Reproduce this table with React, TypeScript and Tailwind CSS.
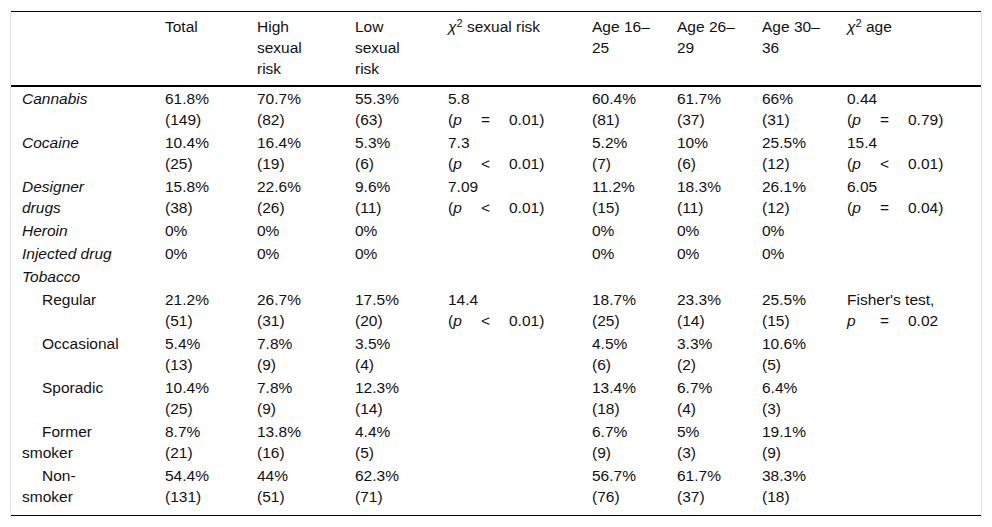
import React from 'react'

type Cell = string[] | React.ReactNode

// ─── p-value line: "(p  =  0.01)" with wide gaps ──────────────────────────────
function PLine({ op, val, paren = true }: { op: string; val: string; paren?: boolean }) {
  return (
    <div className="whitespace-nowrap">
      <span className="inline-block w-[33px]">{paren && '('}<i>p</i></span>
      <span className="inline-block w-[28px]">{op}</span>
      {val}{paren && ')'}
    </div>
  )
}

function Chi({ label }: { label: string }) {
  return (
    <span><i>χ</i><sup className="text-[11px]">2</sup> {label}</span>
  )
}

const stat = (chi: string, op: string, val: string) => (
  <>
    <div>{chi}</div>
    <PLine op={op} val={val} />
  </>
)

interface Row {
  label: string
  italic?: boolean
  indent?: boolean
  cells: Cell[]
}

const rows: Row[] = [
  { label: 'Cannabis', italic: true, cells: [['61.8%', '(149)'], ['70.7%', '(82)'], ['55.3%', '(63)'], stat('5.8', '=', '0.01'), ['60.4%', '(81)'], ['61.7%', '(37)'], ['66%', '(31)'], stat('0.44', '=', '0.79')] },
  { label: 'Cocaine', italic: true, cells: [['10.4%', '(25)'], ['16.4%', '(19)'], ['5.3%', '(6)'], stat('7.3', '<', '0.01'), ['5.2%', '(7)'], ['10%', '(6)'], ['25.5%', '(12)'], stat('15.4', '<', '0.01')] },
  { label: 'Designer drugs', italic: true, cells: [['15.8%', '(38)'], ['22.6%', '(26)'], ['9.6%', '(11)'], stat('7.09', '<', '0.01'), ['11.2%', '(15)'], ['18.3%', '(11)'], ['26.1%', '(12)'], stat('6.05', '=', '0.04')] },
  { label: 'Heroin', italic: true, cells: [['0%'], ['0%'], ['0%'], null, ['0%'], ['0%'], ['0%'], null] },
  { label: 'Injected drug', italic: true, cells: [['0%'], ['0%'], ['0%'], null, ['0%'], ['0%'], ['0%'], null] },
  { label: 'Tobacco', italic: true, cells: [null, null, null, null, null, null, null, null] },
  {
    label: 'Regular', indent: true, cells: [['21.2%', '(51)'], ['26.7%', '(31)'], ['17.5%', '(20)'], stat('14.4', '<', '0.01'), ['18.7%', '(25)'], ['23.3%', '(14)'], ['25.5%', '(15)'],
      <>
        <div>Fisher's test,</div>
        <PLine op="=" val="0.02" paren={false} />
      </>]
  },
  { label: 'Occasional', indent: true, cells: [['5.4%', '(13)'], ['7.8%', '(9)'], ['3.5%', '(4)'], null, ['4.5%', '(6)'], ['3.3%', '(2)'], ['10.6%', '(5)'], null] },
  { label: 'Sporadic', indent: true, cells: [['10.4%', '(25)'], ['7.8%', '(9)'], ['12.3%', '(14)'], null, ['13.4%', '(18)'], ['6.7%', '(4)'], ['6.4%', '(3)'], null] },
  { label: 'Former smoker', indent: true, cells: [['8.7%', '(21)'], ['13.8%', '(16)'], ['4.4%', '(5)'], null, ['6.7%', '(9)'], ['5%', '(3)'], ['19.1%', '(9)'], null] },
  { label: 'Non-smoker', indent: true, cells: [['54.4%', '(131)'], ['44%', '(51)'], ['62.3%', '(71)'], null, ['56.7%', '(76)'], ['61.7%', '(37)'], ['38.3%', '(18)'], null] },
]

const headers: React.ReactNode[] = [
  '',
  <div>Total</div>,
  <><div>High</div><div>sexual</div><div>risk</div></>,
  <><div>Low</div><div>sexual</div><div>risk</div></>,
  <Chi label="sexual risk" />,
  <><div>Age 16–</div><div>25</div></>,
  <><div>Age 26–</div><div>29</div></>,
  <><div>Age 30–</div><div>36</div></>,
  <Chi label="age" />,
]

function renderCell(c: Cell) {
  if (c == null) return null
  if (Array.isArray(c)) return c.map((l, i) => <div key={i} className="whitespace-nowrap">{l}</div>)
  return c
}

export default function App() {
  return (
    <div className="bg-white w-[992px] h-[527px] overflow-hidden text-[15.5px] leading-[21px] text-[#111]" style={{ fontFamily: '"Liberation Sans", Arial, sans-serif' }}>
      <div className="ml-[10px] mt-[10px] w-[972px] border-x border-[#e4e4e4] pt-[1px]">
        <table className="w-full table-fixed border-collapse">
          <colgroup>
            <col className="w-[143px]" />
            <col className="w-[92px]" />
            <col className="w-[98px]" />
            <col className="w-[93px]" />
            <col className="w-[144px]" />
            <col className="w-[85px]" />
            <col className="w-[85px]" />
            <col className="w-[85px]" />
            <col className="w-[145px]" />
          </colgroup>
          <thead>
            <tr className="border-t border-black border-b-2">
              {headers.map((h, i) => (
                <th key={i} className="text-left font-normal align-top pl-[11px] pr-2 pt-[4px] pb-[6px]">{h}</th>
              ))}
            </tr>
          </thead>
          <tbody className="border-b border-black">
            {rows.map((r, ri) => {
              const last = ri === rows.length - 1
              const pad = last ? 'pt-[1px] pb-[8px]' : 'py-[1px]'
              return (
                <tr key={r.label}>
                  <td className={`align-top pl-[11px] pr-[36px] ${pad}`}>
                    <div className={`${r.italic ? 'italic' : ''} ${r.indent ? 'indent-[20px]' : ''}`}>{r.label}</div>
                  </td>
                  {r.cells.map((c, ci) => (
                    <td key={ci} className={`align-top pl-[11px] pr-1 ${pad}`}>{renderCell(c)}</td>
                  ))}
                </tr>
              )
            })}
          </tbody>
        </table>
      </div>
    </div>
  )
}
